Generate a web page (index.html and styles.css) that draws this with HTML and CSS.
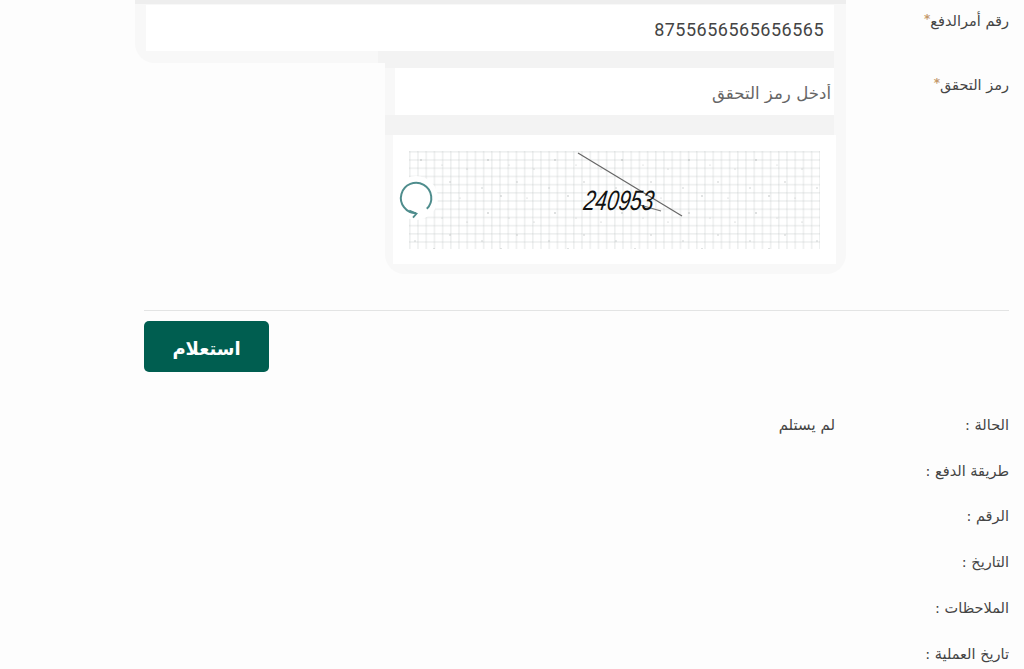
FILE: index.html
```html
<!DOCTYPE html>
<html lang="ar" dir="rtl">
<head>
    <meta charset="UTF-8">
    <meta name="viewport" content="width=device-width, initial-scale=1.0">
    <title>استعلام</title>
    <link rel="stylesheet" href="styles.css">
</head>
<body>

<div class="page">
    <div class="form-row first">
        <label class="field-label" for="orderNo">رقم أمرالدفع<span class="req">*</span></label>
        <div class="field-box order-box">
            <input class="text-input number-input" id="orderNo" type="text" value="8755656565656565">
        </div>
    </div>

    <div class="form-row second">
        <label class="field-label" for="code">رمز التحقق<span class="req">*</span></label>
        <div class="field-box code-box">
            <input class="text-input code-input" id="code" type="text" placeholder="أدخل رمز التحقق">
            <div class="captcha">
                <svg class="captcha-img" width="411" height="98" viewBox="0 0 411 98">
                    <defs>
                        <pattern id="grid" width="8.2" height="8.2" patternUnits="userSpaceOnUse">
                            <path d="M0.8 0V8.2M0 0.8H8.2" stroke="#eef0f0" stroke-width="1.600" fill="none"/>
                            <circle cx="0.8" cy="0.8" r="0.6" fill="#d2d5d5"/>
                        </pattern>
                        <pattern id="noise" width="67" height="53" patternUnits="userSpaceOnUse">
                            <circle cx="12" cy="9" r="0.8" fill="#b4b8b8"/>
                            <circle cx="41" cy="31" r="0.7" fill="#bcc0c0"/>
                            <circle cx="58" cy="18" r="0.6" fill="#b6baba"/>
                            <circle cx="25" cy="45" r="0.8" fill="#babebe"/>
                            <circle cx="33" cy="14" r="0.6" fill="#c2c6c6"/>
                            <circle cx="6" cy="37" r="0.7" fill="#c0c4c4"/>
                            <circle cx="51" cy="47" r="0.6" fill="#bec2c2"/>
                        </pattern>
                    </defs>
                    <rect width="411" height="98" fill="url(#grid)"/>
                    <rect width="411" height="98" fill="url(#noise)"/>
                    <line x1="169" y1="2" x2="273" y2="65" stroke="#666" stroke-width="1.200"/>
                    <line x1="231" y1="54" x2="252" y2="60" stroke="#777" stroke-width="1.200"/>
                    <text class="captcha-text" x="182" y="59" transform="skewX(-8)" textLength="70" lengthAdjust="spacingAndGlyphs">240953</text>
                </svg>
                <button class="refresh" type="button" aria-label="تحديث">
                    <svg width="44" height="44" viewBox="0 0 44 44">
                        <path d="M32.800 32.800A15.200 15.200 0 1 0 22 37.200" fill="none" stroke="#4f8d8d" stroke-width="2"/>
                        <path d="M15.300 34.500L22.500 37.500L19 41.700" fill="none" stroke="#4f8d8d" stroke-width="1.800"/>
                    </svg>
                </button>
            </div>
        </div>
    </div>

    <hr class="divider">

    <button class="submit-btn" type="button">استعلام</button>

    <div class="details">
        <div class="detail-row"><span class="detail-name">الحالة :</span><span class="detail-value">لم يستلم</span></div>
        <div class="detail-row"><span class="detail-name">طريقة الدفع :</span></div>
        <div class="detail-row"><span class="detail-name">الرقم :</span></div>
        <div class="detail-row"><span class="detail-name">التاريخ :</span></div>
        <div class="detail-row"><span class="detail-name">الملاحظات :</span></div>
        <div class="detail-row"><span class="detail-name">تاريخ العملية :</span></div>
    </div>
</div>

</body>
</html>
```

FILE: styles.css
```css
:root {
    --text: #444;
    --pale: #f8f8f8;
    --band: #f3f3f3;
    --green: #005e50;
}
* {
    box-sizing: border-box;
}
html, body {
    height: 100%;
}
body {
    margin: 0;
    height: 669px;
    overflow: hidden;
    font-family: "DejaVu Sans", "Noto Sans", sans-serif;
    background: #fdfdfd;
    color: var(--text);
}
.page {
    padding: 0 15px 0 135px;
}
.form-row {
    display: flex;
}
.field-label {
    width: 163px;
    flex: none;
    font-size: 14.500px;
    color: var(--text);
}
.first .field-label {
    padding-top: 12px;
}
.second .field-label {
    padding-top: 13px;
}
.req {
    color: #c49a6c;
    font-size: 12px;
    font-weight: bold;
    vertical-align: 3px;
}
.field-box {
    background-color: var(--pale);
    background-repeat: no-repeat;
}
.order-box {
    width: 711px;
    height: 63px;
    padding: 5px 12px 0 11px;
    border-bottom-left-radius: 20px;
    background-image: linear-gradient(var(--band), var(--band)), linear-gradient(#eeeeee, #eeeeee);
    background-size: 456px 12px, 100% 4px;
    background-position: right 12px bottom 0, 0 0;
}
.code-box {
    width: 461px;
    height: 211px;
    padding: 5px 10px 10px 8px;
    border-radius: 0 0 20px 20px;
    background-image: linear-gradient(var(--band), var(--band)), linear-gradient(var(--band), var(--band));
    background-size: calc(100% - 12px) 5px, calc(100% - 12px) 20px;
    background-position: 0 0, 0 52px;
}
.text-input {
    display: block;
    width: 100%;
    height: 46px;
    border: none;
    outline: none;
    background: #fff;
    font-family: inherit;
    color: var(--text);
}
.number-input {
    padding: 3px 10px 0;
    font-family: "Roboto", sans-serif;
    font-size: 18px;
    letter-spacing: 0.5px;
}
.code-input {
    width: 439px;
    height: 47px;
    margin: 0 2px 20px;
    padding: 3px 3px 0;
    font-size: 16.600px;
}
.code-input::placeholder {
    color: #666;
    opacity: 1;
}
.captcha {
    position: relative;
    height: 129px;
    padding: 16px;
    background: #fff;
}
.captcha-img {
    display: block;
    direction: ltr;
}
.captcha-text {
    font-family: "Liberation Sans", sans-serif;
    font-style: italic;
    font-size: 28px;
    fill: #111;
}
.refresh {
    position: absolute;
    left: 1px;
    top: 41px;
    width: 44px;
    height: 44px;
    padding: 0;
    border: none;
    border-radius: 50%;
    background: #fff;
}
.refresh svg {
    display: block;
}
.divider {
    height: 1px;
    margin: 36px 0 10px 9px;
    border: none;
    background: #e3e4e4;
}
.submit-btn {
    display: block;
    width: 125px;
    height: 51px;
    margin-right: auto;
    margin-left: 9px;
    padding-top: 5px;
    border: none;
    border-radius: 5px;
    background: var(--green);
    color: #fff;
    font-family: inherit;
    font-size: 18px;
    font-weight: bold;
}
.details {
    margin-top: 30px;
}
.detail-row {
    display: flex;
    align-items: center;
    height: 45.800px;
    font-size: 14.500px;
}
.detail-name {
    width: 174px;
    flex: none;
}
.detail-value {
    font-size: 15px;
}
```
